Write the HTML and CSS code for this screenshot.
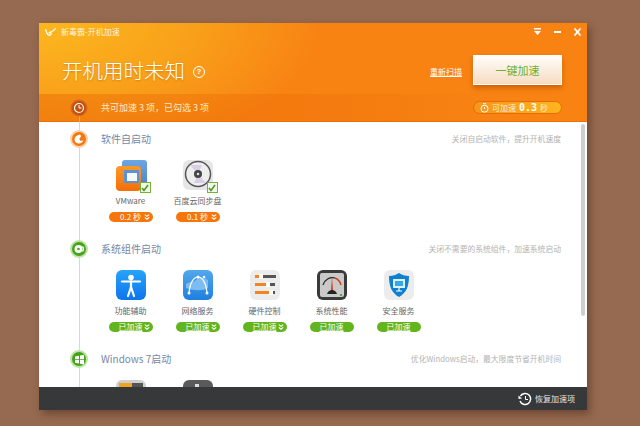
FILE: index.html
```html
<!DOCTYPE html>
<html lang="zh">
<head>
<meta charset="utf-8">
<title>新毒霸-开机加速</title>
<link rel="stylesheet" href="styles.css">
</head>
<body>
<div class="window">
  <header class="head">
    <div class="titlebar">
      <svg class="logo" viewBox="0 0 11 8" width="11" height="8"><path d="M.7 1.500C1.500 5 3 7.300 4.500 7.300 6 7.300 6.500 5.500 5.700 4.500 5 3.700 3.800 4.200 4.200 5.300M6 4C7.500 3.500 9 2.500 10.300 .7" fill="none" stroke="#fff" stroke-width="1.200" stroke-linecap="round"/></svg>
      <span class="apptitle">新毒霸-开机加速</span>
      <div class="winbtns">
        <svg width="10" height="8" viewBox="0 0 10 8"><path d="M1 0h7v1.500H1zM1 3h7L4.500 7z" fill="#fff"/></svg>
        <svg width="10" height="8" viewBox="0 0 10 8"><path d="M1 3h7v2H1z" fill="#fff"/></svg>
        <svg width="10" height="8" viewBox="0 0 10 8"><path d="M1.500 .5l6 7M7.500 .5l-6 7" stroke="#fff" stroke-width="1.800"/></svg>
      </div>
    </div>
    <div class="hero">
      <h1 class="heading">开机用时未知</h1>
      <span class="help">?</span>
      <a class="rescan">重新扫描</a>
      <button class="boost">一键加速</button>
    </div>
    <div class="band">
      <span class="node node-clock">
        <svg width="12" height="12" viewBox="0 0 12 12"><circle cx="6" cy="6" r="4.500" fill="none" stroke="#fff" stroke-width="1.200"/><path d="M6 3v3h2.500" fill="none" stroke="#fff"/></svg>
      </span>
      <span class="bandtext">共可加速 3 项，已勾选 3 项</span>
      <span class="saved">
        <svg width="9" height="10" viewBox="0 0 9 10"><circle cx="4.500" cy="5.700" r="3.500" fill="none" stroke="#fff"/><path d="M3 .7h3M4.500 4v2" stroke="#fff"/></svg>
        可加速 <b>0.3</b> 秒
      </span>
    </div>
  </header>

  <main class="content">
    <div class="rail"></div>
    <div class="scrolltrack"><div class="thumb"></div></div>

    <section class="section">
      <div class="sechead">
        <span class="node node-orange">
          <svg width="10" height="10" viewBox="0 0 10 10"><path d="M6 .5C2.500 1 .5 3 .5 5.500.5 8 2.500 9.500 5 9.500 7 9.500 9 8 9.500 6 8 7.500 5.500 7 5.500 5 5.500 3.500 7 3.500 7 2.500 7 1.500 6.500 1 6 .5z" fill="#fff"/></svg>
        </span>
        <h2 class="sectitle">软件自启动</h2>
        <span class="secnote">关闭自启动软件，提升开机速度</span>
      </div>
      <div class="items">
        <div class="item">
          <div class="icon">
            <svg viewBox="0 0 31 31" width="31" height="31">
              <defs>
                <linearGradient id="vmo" x1="0" y1="0" x2="0" y2="1"><stop offset="0" stop-color="#fb9a2a"/><stop offset="1" stop-color="#f56e08"/></linearGradient>
                <linearGradient id="vmb" x1="0" y1="0" x2="0" y2="1"><stop offset="0" stop-color="#6ea6e0"/><stop offset="1" stop-color="#4a84c4"/></linearGradient>
              </defs>
              <rect x="6" y="0" width="25" height="25" rx="3" fill="url(#vmb)"/>
              <rect x="0" y="6" width="25" height="25" rx="4" fill="url(#vmo)"/>
              <rect x="8" y="10" width="15" height="13" fill="#5a93d0"/>
              <rect x="11" y="13" width="10" height="8" fill="#f6f8fa"/>
            </svg>
            <span class="check"><svg width="8" height="8" viewBox="0 0 8 8"><path d="M1 4l2 2.500L7 1" fill="none" stroke="#4c9a1e" stroke-width="1.600"/></svg></span>
          </div>
          <div class="label">VMware</div>
          <div class="pill pill-orange">0.2 秒<svg class="chev" width="6" height="6" viewBox="0 0 6 6"><path d="M.8 .6L3 2.400 5.200 .6M.8 3.400L3 5.200 5.200 3.400" fill="none" stroke="#fff" stroke-width="1.100"/></svg></div>
        </div>
        <div class="item">
          <div class="icon">
            <svg viewBox="0 0 30 30" width="30" height="30">
              <rect width="30" height="30" rx="6" fill="#e6e6e6"/>
              <circle cx="15" cy="14" r="12.500" fill="#eee" stroke="#555" stroke-width="1.500"/>
              <path d="M15 14L7 5h12zM15 14l8 9H11z" fill="#d8cfe6"/>
              <circle cx="15" cy="14" r="4" fill="#444"/>
              <circle cx="15" cy="14" r="1.300" fill="#ddd"/>
            </svg>
            <span class="check"><svg width="8" height="8" viewBox="0 0 8 8"><path d="M1 4l2 2.500L7 1" fill="none" stroke="#4c9a1e" stroke-width="1.600"/></svg></span>
          </div>
          <div class="label">百度云同步盘</div>
          <div class="pill pill-orange">0.1 秒<svg class="chev" width="6" height="6" viewBox="0 0 6 6"><path d="M.8 .6L3 2.400 5.200 .6M.8 3.400L3 5.200 5.200 3.400" fill="none" stroke="#fff" stroke-width="1.100"/></svg></div>
        </div>
      </div>
    </section>

    <section class="section">
      <div class="sechead">
        <span class="node node-green">
          <svg width="11" height="10" viewBox="0 0 11 10"><circle cx="4.500" cy="5" r="4" fill="#fff"/><circle cx="4.500" cy="5" r="1.300" fill="#4aa31c"/><path d="M8.500 2.500a4 4 0 0 1 0 5" fill="none" stroke="#fff" stroke-width="1.300"/></svg>
        </span>
        <h2 class="sectitle">系统组件启动</h2>
        <span class="secnote">关闭不需要的系统组件，加速系统启动</span>
      </div>
      <div class="items">
        <div class="item">
          <div class="icon">
            <svg viewBox="0 0 30 30" width="30" height="30">
              <defs><linearGradient id="acc" x1="0" y1="0" x2="0" y2="1"><stop offset="0" stop-color="#26a4fb"/><stop offset="1" stop-color="#0e75ec"/></linearGradient></defs>
              <rect width="30" height="30" rx="6" fill="url(#acc)"/>
              <circle cx="15" cy="7.500" r="2.800" fill="#fff"/>
              <path d="M6 11.500h18M15 11v7M15 17l-3 9M15 17l3 9" stroke="#fff" stroke-width="2.200" fill="none" stroke-linecap="round"/>
            </svg>
          </div>
          <div class="label">功能辅助</div>
          <div class="pill pill-green"><u>已加速</u><svg class="chev" width="6" height="6" viewBox="0 0 6 6"><path d="M.8 .6L3 2.400 5.200 .6M.8 3.400L3 5.200 5.200 3.400" fill="none" stroke="#fff" stroke-width="1.100"/></svg></div>
        </div>
        <div class="item">
          <div class="icon">
            <svg viewBox="0 0 30 30" width="30" height="30">
              <defs><linearGradient id="net" x1="0" y1="0" x2="0" y2="1"><stop offset="0" stop-color="#52a8ec"/><stop offset="1" stop-color="#1f7fe0"/></linearGradient></defs>
              <rect width="30" height="30" rx="6" fill="url(#net)"/>
              <path d="M3 14c4-3 7-1 10-4s7-3 12 0v8c-5 3-14 3-22 0z" fill="#7cbcf0"/>
              <path d="M6 23C7 12 11 7 15 7s8 5 9 16" fill="none" stroke="#fff" stroke-width="1.200"/>
              <circle cx="6" cy="23" r="1.500" fill="#fff"/><circle cx="24" cy="23" r="1.500" fill="#fff"/><circle cx="15" cy="7" r="1.500" fill="#fff"/><circle cx="21" cy="7" r="1.300" fill="#fff"/>
            </svg>
          </div>
          <div class="label">网络服务</div>
          <div class="pill pill-green"><u>已加速</u><svg class="chev" width="6" height="6" viewBox="0 0 6 6"><path d="M.8 .6L3 2.400 5.200 .6M.8 3.400L3 5.200 5.200 3.400" fill="none" stroke="#fff" stroke-width="1.100"/></svg></div>
        </div>
        <div class="item">
          <div class="icon">
            <svg viewBox="0 0 30 30" width="30" height="30">
              <rect width="30" height="30" rx="6" fill="#ececec"/>
              <rect x="12" y="5" width="14" height="3" fill="#555"/><rect x="5" y="5" width="4" height="3" fill="#f5831f"/>
              <rect x="5" y="13" width="11" height="3" fill="#f5831f"/><rect x="19" y="13" width="6" height="3" fill="#555"/>
              <rect x="5" y="21" width="15" height="3" fill="#f5831f"/><rect x="23" y="21" width="2" height="3" fill="#555"/>
              <rect x="9" y="4" width="4" height="5" fill="#fff"/><rect x="16" y="12" width="4" height="5" fill="#fff"/><rect x="19" y="20" width="4" height="5" fill="#fff"/>
            </svg>
          </div>
          <div class="label">硬件控制</div>
          <div class="pill pill-green"><u>已加速</u><svg class="chev" width="6" height="6" viewBox="0 0 6 6"><path d="M.8 .6L3 2.400 5.200 .6M.8 3.400L3 5.200 5.200 3.400" fill="none" stroke="#fff" stroke-width="1.100"/></svg></div>
        </div>
        <div class="item">
          <div class="icon">
            <svg viewBox="0 0 30 30" width="30" height="30">
              <rect width="30" height="30" rx="6" fill="#3a3a3a"/>
              <rect x="3" y="3" width="24" height="24" rx="2" fill="#c9c9c9"/>
              <path d="M6 15a10 10 0 0 1 12-7" fill="none" stroke="#222" stroke-width="1.200"/>
              <path d="M18 8a10 10 0 0 1 6 7" fill="none" stroke="#d8391f" stroke-width="1.500"/>
              <path d="M15 6l1 15h-2z" fill="#d8391f"/>
              <path d="M10 24c1-3 3-4 5-4s4 1 5 4z" fill="#222"/>
              <rect x="23" y="24" width="2" height="2" fill="#4caf26"/>
            </svg>
          </div>
          <div class="label">系统性能</div>
          <div class="pill pill-green"><u>已加速</u></div>
        </div>
        <div class="item">
          <div class="icon">
            <svg viewBox="0 0 30 30" width="30" height="30">
              <rect width="30" height="30" rx="6" fill="#ececec"/>
              <path d="M15 3c3 2 6 3 10 3 0 11-3 17-10 21C8 23 5 17 5 6c4 0 7-1 10-3z" fill="#0f7fd0"/>
              <rect x="9" y="9" width="12" height="9" fill="#d8f1fb"/>
              <rect x="11" y="11" width="8" height="5" fill="#37a8e2"/>
              <path d="M15 18v3M12 21h6" stroke="#fff" stroke-width="1.200"/>
            </svg>
          </div>
          <div class="label">安全服务</div>
          <div class="pill pill-green"><u>已加速</u></div>
        </div>
      </div>
    </section>

    <section class="section">
      <div class="sechead">
        <span class="node node-green">
          <svg width="11" height="11" viewBox="0 0 11 11"><path d="M1 2.500l4-.8v3.500H1zM6 1.500l4-.8v4.500H6zM1 6h4v3.500l-4-.8zM6 6h4v4.500l-4-.8z" fill="#fff"/></svg>
        </span>
        <h2 class="sectitle">Windows 7启动</h2>
        <span class="secnote">优化Windows启动，最大限度节省开机时间</span>
      </div>
      <div class="items">
        <div class="item">
          <div class="icon">
            <svg viewBox="0 0 30 30" width="30" height="30">
              <rect width="30" height="30" rx="6" fill="#cfcfcf"/>
              <rect x="3" y="3" width="13" height="27" fill="#f0a51c"/>
              <rect x="16" y="3" width="11" height="27" fill="#555"/>
            </svg>
          </div>
        </div>
        <div class="item">
          <div class="icon">
            <svg viewBox="0 0 30 30" width="30" height="30">
              <rect width="30" height="30" rx="6" fill="#5a5a5a"/>
              <rect x="12" y="4" width="4" height="3" fill="#ddd"/>
            </svg>
          </div>
        </div>
      </div>
    </section>
  </main>

  <footer class="foot">
    <svg width="14" height="14" viewBox="0 0 14 14"><path d="M2.500 4A5.500 5.500 0 1 1 2 9" fill="none" stroke="#fff" stroke-width="1.500"/><path d="M.5 3.500L4 6.500 .5 7z" fill="#fff"/><path d="M7.500 4v3.500H10" fill="none" stroke="#fff"/></svg>
    <span class="restore">恢复加速项</span>
  </footer>
</div>
</body>
</html>
```

FILE: styles.css
```css
* { box-sizing: border-box; }
html, body { margin: 0; height: 100%; }
body {
  width: 640px;
  height: 426px;
  overflow: hidden;
  padding: 23px 53px 16px 39px;
  background: #966a50;
  font-family: "Noto Sans CJK SC", "Liberation Sans", sans-serif;
}
.window {
  display: flex;
  flex-direction: column;
  height: 387px;
  box-shadow: 3px 4px 8px rgba(60, 30, 15, .45);
}
.head {
  flex: none;
  height: 99px;
  background: radial-gradient(ellipse 280px 140px at 0 0, #fbb81f 0%, #f9a01a 55%, #f88313 100%) #f88313;
  color: #fff;
  display: flex;
  flex-direction: column;
}
.titlebar {
  height: 16px;
  padding: 1px 4px 0 6px;
  display: flex;
  align-items: center;
  gap: 5px;
}
.apptitle { font-size: 8px; color: #fff2d8; line-height: 12px; }
.winbtns { margin-left: auto; display: flex; gap: 10px; align-items: center; }
.hero {
  height: 55px;
  display: flex;
  align-items: center;
  padding: 7px 25px 0 23px;
}
.heading {
  margin: 0;
  font-size: 20.5px;
  line-height: 26px;
  font-weight: 300;
  color: #fff;
  text-shadow: 0 1px 2px rgba(170, 90, 0, .5);
}
.help {
  width: 12px;
  height: 12px;
  margin: 3px 0 0 8px;
  border: 1px solid #fff;
  border-radius: 50%;
  font: bold 8px/10px "Liberation Sans", sans-serif;
  text-align: center;
}
.rescan {
  margin-left: auto;
  margin-right: 11px;
  margin-top: 4px;
  font-size: 8px;
  line-height: 12px;
  color: #fff;
  text-decoration: underline;
}
.boost {
  width: 89px;
  height: 30px;
  padding: 0;
  border: 1px solid #fff;
  background: linear-gradient(#fffdfb, #f5dcc2);
  color: #6eb02e;
  font-size: 11px;
  font-family: inherit;
  box-shadow: 0 3px 5px rgba(190, 80, 0, .7);
}
.band {
  position: relative;
  height: 28px;
  display: flex;
  align-items: center;
  background: linear-gradient(90deg, rgba(232, 96, 0, .42), rgba(232, 96, 0, .22) 55%, rgba(232, 96, 0, 0) 85%);
  border-bottom: 1px solid #ee6f08;
  padding: 0 25px 0 62px;
}
.band::after {
  content: "";
  position: absolute;
  left: 39.500px;
  top: 22px;
  bottom: -1px;
  width: 1px;
  background: #e9a878;
}
.bandtext { font-size: 9px; line-height: 12px; color: #ffe9c8; }
.saved {
  margin-left: auto;
  width: 89px;
  height: 13px;
  border: 1px solid #e86c06;
  border-radius: 7px;
  background: linear-gradient(90deg, #f7951c, #fdb51e);
  font-size: 8px;
  line-height: 11px;
  display: flex;
  align-items: center;
  gap: 3px;
  padding-left: 6px;
  color: #ffeccd;
}
.saved b { font: bold 10px/11px "DejaVu Sans Mono", monospace; color: #fff; }
.node {
  position: absolute;
  z-index: 1;
  left: 33px;
  width: 14px;
  height: 14px;
  border-radius: 50%;
  display: flex;
  align-items: center;
  justify-content: center;
}
.node-clock { top: 7px; background: #c4500e; box-shadow: 0 0 0 1.500px #d9661a; }
.node-orange { top: 10px; background: #f5780f; box-shadow: 0 0 0 2px #fbd2ad; }
.node-green { top: 10px; background: #45a319; box-shadow: 0 0 0 2px #bfe2a6; }
.content {
  position: relative;
  flex: none;
  height: 265px;
  overflow: hidden;
  background: #fff;
}
.rail {
  position: absolute;
  left: 39.500px;
  top: 0;
  bottom: 0;
  width: 1px;
  background: #d8d8d8;
}
.scrolltrack {
  position: absolute;
  right: 2px;
  top: 2px;
  width: 4px;
  height: 192px;
}
.thumb { height: 100%; background: #cfcfcf; border-radius: 2px; }
.section { position: relative; height: 110px; padding-right: 26px; }
.sechead {
  height: 33px;
  display: flex;
  align-items: center;
  padding-left: 62px;
}
.sectitle {
  margin: 0;
  font-size: 10px;
  line-height: 14px;
  font-weight: 400;
  color: #7688a6;
}
.secnote {
  margin-left: auto;
  font-size: 7.800px;
  line-height: 12px;
  color: #b3b3b3;
}
.items {
  display: flex;
  padding-left: 58px;
  padding-top: 5px;
}
.item {
  width: 67px;
  display: flex;
  flex-direction: column;
  align-items: center;
}
.icon { position: relative; width: 30px; height: 30px; }
.icon > svg { display: block; }
.check {
  position: absolute;
  right: -5px;
  bottom: -3px;
  width: 11px;
  height: 11px;
  border: 1px solid #78b040;
  background: #f2f7ec;
  display: flex;
  align-items: center;
  justify-content: center;
}
.label {
  margin-top: 5px;
  font-size: 8px;
  line-height: 12px;
  color: #666;
  white-space: nowrap;
}
.pill {
  position: relative;
  margin-top: 5px;
  width: 44px;
  height: 10px;
  border-radius: 5px;
  color: #fff;
  font-size: 8px;
  line-height: 10px;
  text-align: center;
}
.pill-orange { background: #f6760b; }
.pill-green { background: #62b51e; }
.chev {
  position: absolute;
  right: 3px;
  top: 2px;
}
.foot {
  flex: none;
  height: 23px;
  background: #363839;
  display: flex;
  align-items: center;
  justify-content: flex-end;
  gap: 3px;
  padding-right: 12px;
}
.restore { font-size: 8px; line-height: 12px; color: #e4e4e4; }
```
